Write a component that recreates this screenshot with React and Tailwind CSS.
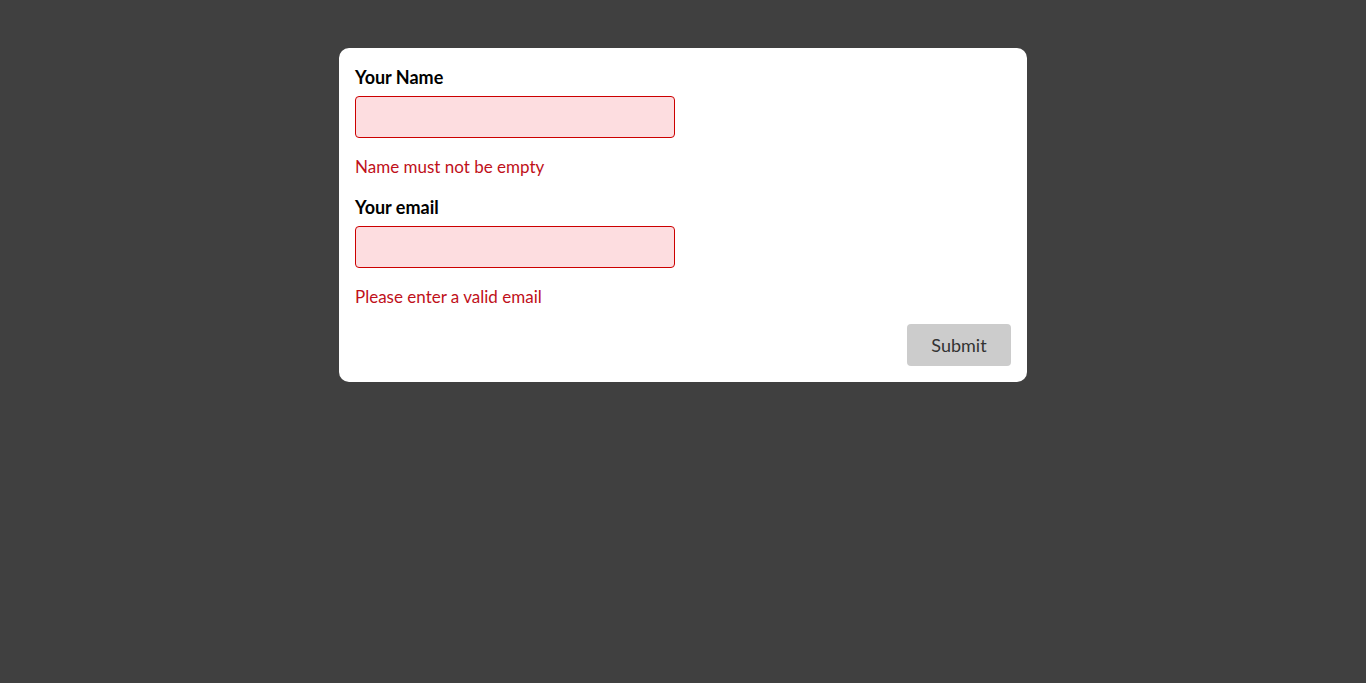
export default function App() {
  return (
    <div className="min-h-screen w-full bg-[#404040] pt-[48px]" style={{ fontFamily: "Lato, 'Open Sans', sans-serif" }}>
      <div className="mx-auto w-[688px] rounded-[10px] bg-white p-4">
        <label className="block h-[26px] text-[18px] leading-[26px] font-bold text-black">Your Name</label>
        <input className="mt-[6px] block h-[42px] w-[320px] rounded-[4px] border border-[#c00] bg-[#fddde0] px-2 outline-none" />
        <div className="mt-4 h-[26px] text-[17px] leading-[26px] text-[#c0101a]">Name must not be empty</div>
        <label className="mt-[14px] block h-[26px] text-[18px] leading-[26px] font-bold text-black">Your email</label>
        <input className="mt-[6px] block h-[42px] w-[320px] rounded-[4px] border border-[#c00] bg-[#fddde0] px-2 outline-none" />
        <div className="mt-4 h-[26px] text-[17px] leading-[26px] text-[#c0101a]">Please enter a valid email</div>
        <div className="mt-[14px] flex justify-end">
          <button className="h-[42px] w-[104px] rounded-[4px] bg-[#ccc] text-[18px] text-[#333]">Submit</button>
        </div>
      </div>
    </div>
  );
}
